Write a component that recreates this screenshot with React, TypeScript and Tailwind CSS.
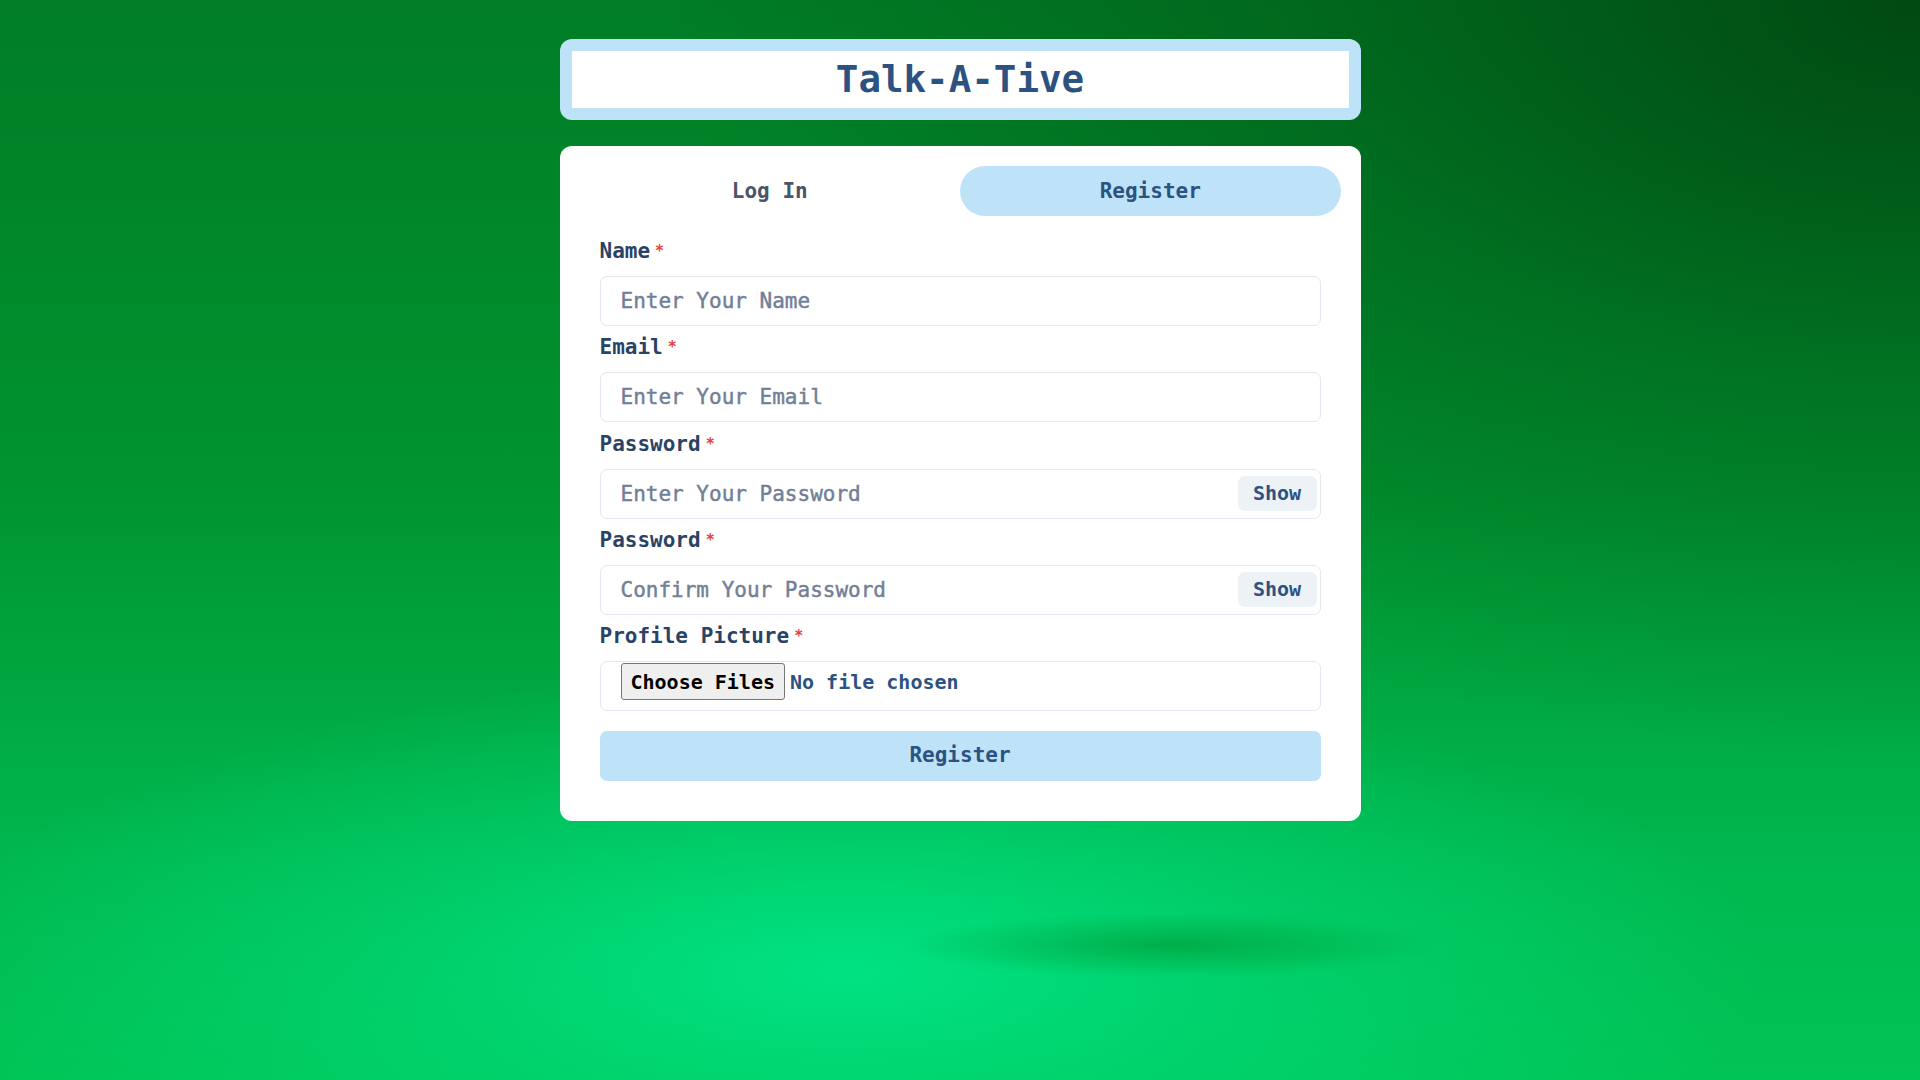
import { useState } from "react";

const FIELDS = [
  { label: "Name", placeholder: "Enter Your Name", secret: false },
  { label: "Email", placeholder: "Enter Your Email", secret: false },
  { label: "Password", placeholder: "Enter Your Password", secret: true },
  { label: "Password", placeholder: "Confirm Your Password", secret: true },
];

function Label({ text }: { text: string }) {
  return (
    <label className="block h-[30px] leading-[30px] mb-[10px] text-[21px] font-bold text-[#2a4365]">
      {text}
      <span className="ml-[5px] align-top text-[15px] font-bold text-[#e53e3e]">*</span>
    </label>
  );
}

function Field({ label, placeholder, secret }: { label: string; placeholder: string; secret: boolean }) {
  const [show, setShow] = useState(false);
  return (
    <div>
      <Label text={label} />
      <div className="relative">
        <input
          type={secret && !show ? "password" : "text"}
          placeholder={placeholder}
          className="w-full h-[50px] border border-[#e2e8f0] rounded-[7px] px-5 text-[21px] text-[#2c5282] [-webkit-text-stroke:0.45px] placeholder:text-[#718096] focus:outline-none"
        />
        {secret && (
          <button
            type="button"
            onClick={() => setShow(!show)}
            className="absolute right-[4px] top-[7px] w-[79px] h-[35px] rounded-[7px] bg-[#edf2f7] text-[20px] font-bold text-[#2c5282]"
          >
            {show ? "Hide" : "Show"}
          </button>
        )}
      </div>
    </div>
  );
}

export default function App() {
  const [tab, setTab] = useState(1);

  return (
    <div className="min-h-screen w-full font-['DejaVu_Sans_Mono',monospace] bg-[radial-gradient(ellipse_14%_3%_at_61%_87.5%,rgba(0,150,50,0.6),transparent),radial-gradient(ellipse_48%_28%_at_44%_90%,#00e283_0%,rgba(0,226,131,0.5)_45%,transparent_100%),radial-gradient(ellipse_65%_70%_at_100%_0%,#004a12_0%,rgba(0,74,18,0.4)_50%,transparent_100%),linear-gradient(180deg,#007d25_0%,#009430_45%,#00b84f_80%,#00c455_100%)]">
      <div className="mx-auto w-[801px] pt-[39px] flex flex-col">
        <div className="bg-[#bee3f8] rounded-xl p-3">
          <div className="bg-white h-[57px] flex items-center justify-center">
            <h1 className="text-[37.5px] font-bold text-[#2c5282]">Talk-A-Tive</h1>
          </div>
        </div>

        <div className="mt-[26px] bg-white rounded-xl p-5">
          <div className="grid grid-cols-2 h-[50px]">
            {["Log In", "Register"].map((t, i) => (
              <button
                key={t}
                onClick={() => setTab(i)}
                className={
                  i === tab
                    ? "h-[50px] leading-[50px] rounded-full bg-[#bee3f8] text-[21px] font-bold text-[#2c5282]"
                    : "h-[50px] leading-[50px] rounded-full text-[21px] font-bold text-[#4a5568]"
                }
              >
                {t}
              </button>
            ))}
          </div>

          <div className="p-5 flex flex-col gap-[6.25px]">
            {FIELDS.map((f) => (
              <Field key={f.placeholder} {...f} />
            ))}
            <div>
              <Label text="Profile Picture" />
              <div className="h-[50px] border border-[#e2e8f0] rounded-[7px] pl-[20px] pt-[1px]">
                <div className="flex items-center h-[37px]">
                  <button
                    type="button"
                    className="h-[37px] px-[9px] bg-[#efefef] border border-[#767676] rounded-[3px] text-[20px] font-bold text-black"
                  >
                    Choose Files
                  </button>
                  <span className="ml-[5px] text-[20px] font-bold text-[#2c5282]">No file chosen</span>
                </div>
              </div>
            </div>
            <button className="mt-[13.5px] h-[50px] w-full rounded-[7px] bg-[#bee3f8] text-[21px] font-bold text-[#2c5282]">
              Register
            </button>
          </div>
        </div>
      </div>
    </div>
  );
}
